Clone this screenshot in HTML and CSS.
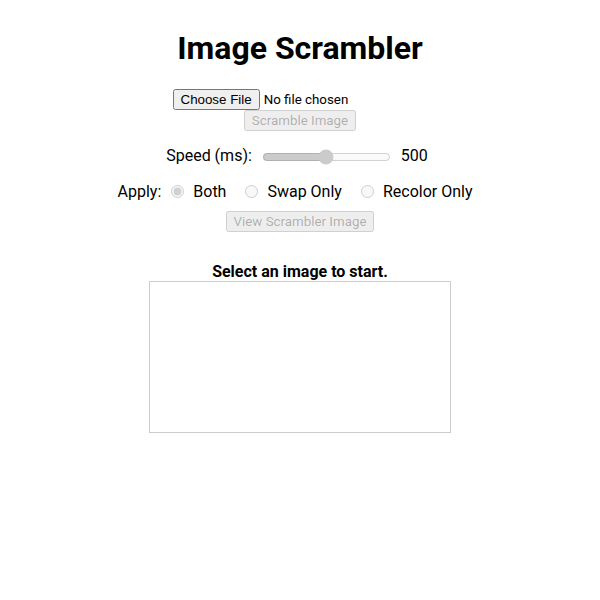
FILE: index.html
```html
<!DOCTYPE html>
<html>
<head>
<meta charset="utf-8">
<title>Image Scrambler</title>
<link rel="stylesheet" href="styles.css">
</head>
<body>
<h1 class="title">Image Scrambler</h1>
<div class="upload">
  <input type="file" class="file-input" accept="image/*">
  <div class="action">
    <button class="btn" disabled>Scramble Image</button>
  </div>
</div>
<div class="row speed-row">
  <label class="speed-label">Speed (ms):</label>
  <input type="range" class="slider" min="0" max="1000" value="500" disabled>
  <span class="speed-value">500</span>
</div>
<div class="row apply-row">
  <span class="apply-label">Apply:</span>
  <label class="opt"><input type="radio" name="mode" checked disabled><span>Both</span></label>
  <label class="opt"><input type="radio" name="mode" disabled><span>Swap Only</span></label>
  <label class="opt"><input type="radio" name="mode" disabled><span>Recolor Only</span></label>
</div>
<div class="action view-action">
  <button class="btn" disabled>View Scrambler Image</button>
</div>
<p class="status">Select an image to start.</p>
<div class="canvas-wrap">
  <canvas class="canvas" width="300" height="150"></canvas>
</div>
</body>
</html>
```
FILE: styles.css
```css
body {
  margin: 0;
  font-family: Roboto, "Liberation Sans", sans-serif;
  font-size: 16px;
  text-align: center;
  color: #000;
  background: #fff;
}
.title {
  font-size: 32px;
  font-weight: 700;
  line-height: 37px;
  margin: 30px 0 0;
}
.upload {
  margin-top: 22px;
}
.file-input {
  font-family: Roboto, "Liberation Sans", sans-serif;
  font-size: 13.33px;
}
.action {
  line-height: 0;
}
.btn {
  font-family: Roboto, "Liberation Sans", sans-serif;
  font-size: 13.33px;
}
.row {
  display: flex;
  justify-content: center;
  align-items: center;
}
.speed-row {
  margin-top: 15px;
  gap: 10px;
  padding-right: 6px;
}
.slider {
  width: 129px;
  margin: 2px 0 0 0;
}
.apply-row {
  margin-top: 17px;
  padding-right: 10px;
}
.opt {
  display: flex;
  align-items: center;
}
.opt input {
  margin: 0 9px 0 10px;
}
.opt + .opt input {
  margin-left: 19px;
}
.view-action {
  margin-top: 10px;
}
.status {
  font-weight: 700;
  margin: 30px 0 0;
  line-height: 19px;
}
.canvas-wrap {
  line-height: 0;
}
.canvas {
  border: 1px solid #ccc;
}
```
